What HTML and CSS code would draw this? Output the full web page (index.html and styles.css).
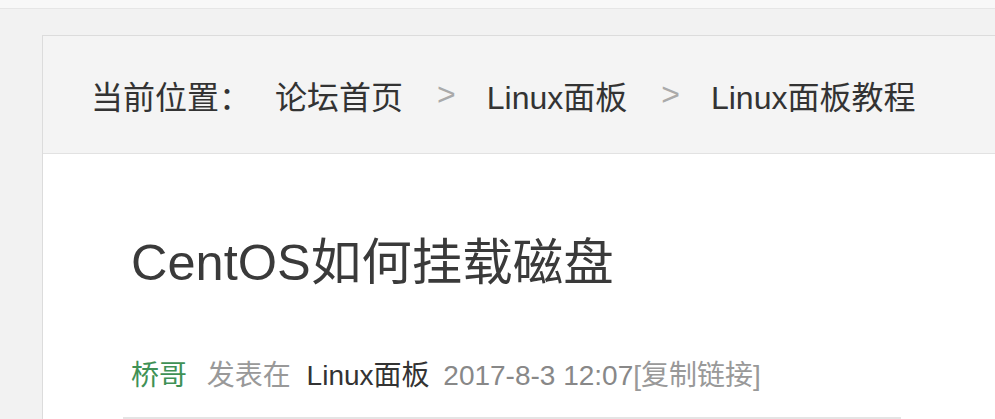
FILE: index.html
```html
<!DOCTYPE html>
<html lang="zh-CN">
<head>
    <meta charset="UTF-8">
    <meta name="viewport" content="width=device-width, initial-scale=1.0">
    <title>CentOS如何挂载磁盘</title>
    <link rel="stylesheet" href="styles.css">
</head>
<body>

    <div class="topbar"></div>

    <div class="wrap">
        <div class="card">
            <div class="crumbs">
                <span class="crumb-label">当前位置：</span>
                <a href="#">论坛首页</a>
                <span class="sep">&gt;</span>
                <a href="#">Linux面板</a>
                <span class="sep">&gt;</span>
                <a href="#">Linux面板教程</a>
            </div>

            <div class="post">
                <h1 class="post-title">CentOS如何挂载磁盘</h1>
                <div class="post-meta">
                    <a href="#" class="author">桥哥</a>
                    <span class="muted">发表在</span>
                    <a href="#" class="forum">Linux面板</a>
                    <span class="date">2017-8-3 12:07</span><a href="#" class="copy">[复制链接]</a>
                </div>
            </div>
        </div>
    </div>

</body>
</html>
```

FILE: styles.css
```css
body {
    margin: 0;
    background: #f2f2f2;
    font-family: "Liberation Sans", "Noto Sans CJK SC", sans-serif;
    color: #333;
    overflow: hidden;
}

a {
    text-decoration: none;
    color: inherit;
}

.topbar {
    height: 8px;
    background: #f8f8f8;
    border-bottom: 1px solid #e6e6e6;
}

.wrap {
    padding: 26px 0 0 42px;
}

.card {
    background: #fff;
    border: 1px solid #dcdcdc;
    border-right: none;
}

/* breadcrumb */
.crumbs {
    display: flex;
    align-items: center;
    height: 117px;
    padding-left: 48px;
    background: #f4f4f4;
    border-bottom: 1px solid #e2e2e2;
    font-size: 32px;
    color: #333;
}

.crumb-label {
    margin-right: 24px;
}

.sep {
    color: #aaa;
    margin: 0 31px 0 34px;
}

/* post header */
.post {
    padding: 79px 0 0 88px;
}

.post-title {
    margin: 0;
    font-size: 50.5px;
    font-weight: normal;
    line-height: 60px;
    color: #3a3a3a;
}

.post-meta {
    margin: 64px 94px 0 -8px;
    padding: 0 0 22px 8px;
    border-bottom: 2px solid #e4e4e4;
    font-size: 28px;
    line-height: 38px;
    color: #999;
}

.author {
    color: #3f9155;
    margin-right: 12px;
}

.muted {
    margin-right: 8px;
}

.forum {
    color: #333;
    margin-right: 6px;
}

.date {
    color: #888;
}

.copy {
    color: #999;
}
```
